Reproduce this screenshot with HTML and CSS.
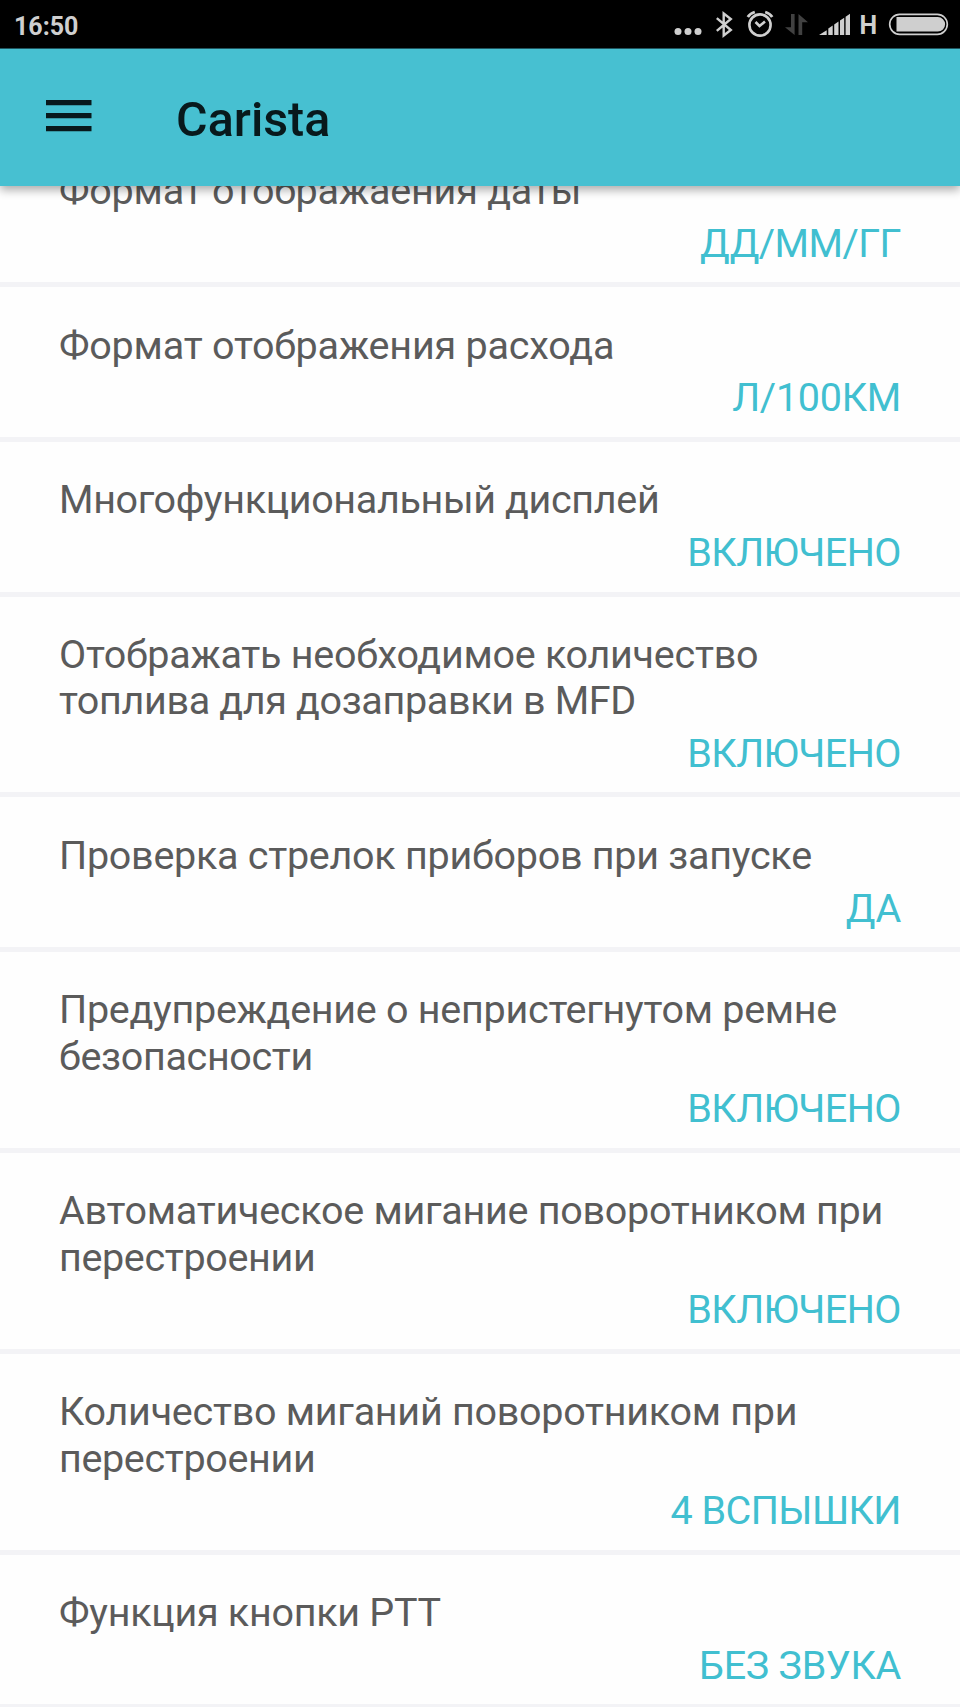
FILE: index.html
```html
<!DOCTYPE html>
<html lang="ru">
<head>
<meta charset="utf-8">
<title>Carista</title>
<link rel="stylesheet" href="styles.css">
</head>
<body>
<div class="screen">
  <header class="status">
    <span class="clock">16:50</span>
    <svg class="status-icons" width="300" height="48" viewBox="0 0 300 48" fill="none" stroke="#cfcfcf">
      <g fill="#cfcfcf" stroke="none"><circle cx="18" cy="31.5" r="3.5"/><circle cx="28" cy="31.5" r="3.5"/><circle cx="38" cy="31.5" r="3.5"/></g>
      <path d="M56.8 18.2 70.8 30 63.7 35.5V13.5L70.8 19 56.8 30.8" stroke-width="2.400"/>
      <g stroke-width="2.600"><circle cx="100" cy="25" r="10.6"/><path d="M95.5 22 99.5 26 105 21.5"/><path d="M87.8 17Q90 13.5 94.8 12M105.200 12Q110 13.500 112.200 17" stroke-width="2.8"/></g>
      <g fill="#414141" stroke="none"><path d="M131 14h3.600v21L125 27.300h6zM138.500 35V14l9.500 8.300h-5.800V35z"/></g>
      <g fill="#cfcfcf" stroke="none"><path d="M159 35 166.700 30.200V35zM168.300 28.600l4.400-3V35h-4.400zM174.200 24.500l4.300-3V35h-4.300zM180 20.600l4.200-2.800V35H180zM185.600 16.700l4.400-3V35h-4.400z"/></g>
      <rect x="229.700" y="14.300" width="57.600" height="20" rx="10" stroke-width="1.700"/>
      <path d="M236.500 17h41.300a7.300 7.300 0 0 1 0 14.600h-41.300z" fill="#cfcfcf" stroke="none"/>
      <text class="network" x="199.500" y="34">H</text>
    </svg>
  </header>
  <div class="appbar">
    <svg class="menu" width="46" height="32" viewBox="0 0 46 32" fill="#08191c"><path d="M0 0h45.500v5.200H0zM0 13h45.500v5.200H0zM0 26h45.500v5.200H0z"/></svg>
    <h1 class="title">Carista</h1>
  </div>
  <main class="viewport">
    <ul class="list">
      <li class="row"><div class="name loose">Формат отображаения даты</div><div class="value tight">ДД/ММ/ГГ</div></li>
      <li class="row"><div class="name loose">Формат отображения расхода</div><div class="value">Л/100КМ</div></li>
      <li class="row"><div class="name tight">Многофункциональный дисплей</div><div class="value tight">ВКЛЮЧЕНО</div></li>
      <li class="row"><div class="name">Отображать необходимое количество<br><span class="tight">топлива для дозаправки в MFD</span></div><div class="value tight">ВКЛЮЧЕНО</div></li>
      <li class="row"><div class="name">Проверка стрелок приборов при запуске</div><div class="value">ДА</div></li>
      <li class="row"><div class="name">Предупреждение о непристегнутом ремне<br><span class="tight">безопасности</span></div><div class="value tight">ВКЛЮЧЕНО</div></li>
      <li class="row"><div class="name">Автоматическое мигание поворотником при<br><span class="tight">перестроении</span></div><div class="value tight">ВКЛЮЧЕНО</div></li>
      <li class="row"><div class="name">Количество миганий поворотником при<br><span class="tight">перестроении</span></div><div class="value tight">4 ВСПЫШКИ</div></li>
      <li class="row"><div class="name">Функция кнопки PTT</div><div class="value">БЕЗ ЗВУКА</div></li>
    </ul>
  </main>
</div>
</body>
</html>
```
FILE: styles.css
```css
body {
  margin: 0;
  background: #fefefe;
  font-family: Roboto, "Noto Sans", sans-serif;
}

.screen {
  display: flex;
  flex-direction: column;
  width: 960px;
  height: 1707px;
  overflow: hidden;
}

.status {
  display: flex;
  flex: none;
  align-items: center;
  justify-content: space-between;
  height: 48px;
  background: #000;
  color: #cfcfcf;
}

.clock {
  margin: 4px 0 0 14px;
  font-size: 25px;
  font-weight: 700;
}

.status-icons {
  align-self: flex-start;
}

.network {
  font-family: Roboto, sans-serif;
  font-size: 25px;
  font-weight: 700;
  fill: #cfcfcf;
  stroke: none;
}

.appbar {
  box-sizing: border-box;
  display: flex;
  flex: none;
  align-items: flex-start;
  position: relative;
  z-index: 1;
  height: 137.600px;
  border-top: 1px solid #1f5660;
  background: #47c0d1;
  box-shadow: 0 4px 9px rgba(0, 0, 0, .33);
}

.menu {
  margin: 51px 0 0 45.600px;
}

.title {
  margin: 43px 0 0 84.500px;
  color: #08191c;
  font-size: 48.400px;
  line-height: 56px;
  font-weight: 500;
}

.viewport {
  flex: 1;
  min-height: 0;
  overflow: hidden;
}

.list {
  margin: -52.800px 0 0;
  padding: 0;
  list-style: none;
}

.row {
  padding: 35.500px 59px 15.200px;
  border-bottom: 5px solid #f3f3f6;
  font-size: 39.500px;
  line-height: 46.300px;
}

.name {
  color: #5b5b5b;
  letter-spacing: -.27px;
  white-space: nowrap;
}

.value {
  margin-top: 6.300px;
  color: #41bfd0;
  letter-spacing: -.27px;
  text-align: right;
}

.name.loose {
  letter-spacing: -.2px;
}

.name.tight,
.name .tight {
  letter-spacing: -.35px;
}

.value.tight {
  letter-spacing: -.55px;
}
```
